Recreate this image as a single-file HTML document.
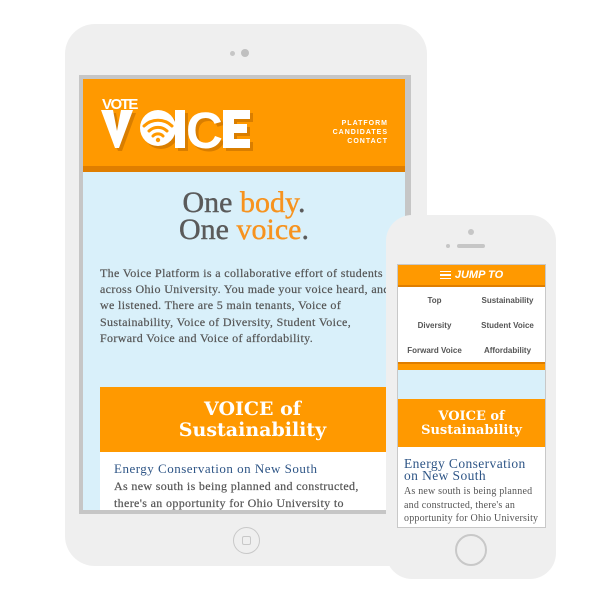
<!DOCTYPE html>
<html><head><meta charset="utf-8"><style>
*{margin:0;padding:0;box-sizing:border-box}
body{width:600px;height:600px;background:#fff;position:relative;overflow:hidden;font-family:"Liberation Serif",serif}
.abs{position:absolute}
.p{font-family:"Liberation Serif",serif;color:#555;white-space:nowrap}
.t{font-family:"DejaVu Serif","Liberation Serif",serif;font-weight:bold;color:#fff;text-align:center;white-space:nowrap}
</style></head><body>
<!-- tablet -->
<div class="abs" style="left:65px;top:24px;width:362px;height:542px;background:#efefef;border-radius:30px"></div>
<div class="abs" style="left:230px;top:51px;width:5px;height:5px;border-radius:50%;background:#c6c6c6"></div>
<div class="abs" style="left:241px;top:49px;width:8px;height:8px;border-radius:50%;background:#c0c0c0"></div>
<div class="abs" style="left:233px;top:527px;width:27px;height:27px;border-radius:50%;border:1.5px solid #c8c8c8"></div>
<div class="abs" style="left:242px;top:536px;width:9px;height:9px;border-radius:2px;border:1.5px solid #c8c8c8"></div>
<div class="abs" style="left:79px;top:75px;width:332px;height:439px;background:#c6c6c6"></div>
<div class="abs" style="left:83px;top:79px;width:322px;height:431px;background:#d9f0fa;overflow:hidden">
  <div class="abs" style="left:0;top:0;width:322px;height:93px;background:#ff9900;border-bottom:6px solid #df7e00"></div>
  <svg class="abs" style="left:14px;top:14px" width="160" height="62" viewBox="0 0 160 62">
    <g font-family="Liberation Sans,sans-serif" font-weight="bold">
      <text x="5" y="16" font-size="15" fill="#fff" letter-spacing="-1.5">VOTE</text>
      <g fill="#d97e00" transform="translate(3,3)">
        <polygon points="4,17 16,17 20,38 24,17 36,17 22,55 18,55"/>
        <circle cx="61" cy="35" r="18"/>
        <rect x="78" y="17" width="10" height="38"/>
        <text x="89" y="55" font-size="51">C</text>
        <polygon points="126,17 153,17 153,26 137,26 137,31 150,31 150,40 137,40 137,46 153,46 153,55 126,55"/>
      </g>
      <g fill="#fff">
        <polygon points="4,17 16,17 20,38 24,17 36,17 22,55 18,55"/>
        <circle cx="61" cy="35" r="18"/>
        <rect x="78" y="17" width="10" height="38"/>
        <text x="89" y="55" font-size="51">C</text>
        <polygon points="126,17 153,17 153,26 137,26 137,31 150,31 150,40 137,40 137,46 153,46 153,55 126,55"/>
      </g>
      <g fill="none" stroke="#ff9900" stroke-width="3" stroke-linecap="round">
        <path d="M47,33 A20,20 0 0 1 75,33"/>
        <path d="M52,38 A13,13 0 0 1 70,38"/>
        <path d="M56,43 A7,7 0 0 1 66,43"/>
      </g>
      <circle cx="61" cy="47" r="2.2" fill="#ff9900"/>
    </g>
  </svg>
  <div class="abs" style="right:17px;top:40px;text-align:right;font:bold 7px/9px 'Liberation Sans',sans-serif;color:#fff;letter-spacing:1px">PLATFORM<br>CANDIDATES<br>CONTACT</div>
  <div class="abs" style="left:0;width:322px;top:110px;text-align:center;font-size:30px;line-height:27px;color:#5a5a5a;-webkit-text-stroke:0.4px #5a5a5a">One <span style="color:#f7931e;-webkit-text-stroke:0.4px #f7931e">body</span>.<br>One <span style="color:#f7931e;-webkit-text-stroke:0.4px #f7931e">voice</span>.</div>
  <div class="abs p" style="left:17px;top:186px;font-size:12px;line-height:16.2px;letter-spacing:0.35px;-webkit-text-stroke:0.2px #555">The Voice Platform is a collaborative effort of students<br>across Ohio University. You made your voice heard, and<br>we listened. There are 5 main tenants, Voice of<br>Sustainability, Voice of Diversity, Student Voice,<br>Forward Voice and Voice of affordability.</div>
  <div class="abs t" style="left:17px;top:308px;width:305px;height:65px;background:#ff9900;font-size:19px;line-height:21px;padding-top:12px">VOICE of<br>Sustainability</div>
  <div class="abs" style="left:17px;top:373px;width:310px;height:70px;background:#fff"></div>
  <div class="abs p" style="left:31px;top:382px;font-size:13px;color:#2e5586;letter-spacing:0.5px">Energy Conservation on New South</div>
  <div class="abs p" style="left:31px;top:399px;font-size:12px;line-height:17px;letter-spacing:0.35px;-webkit-text-stroke:0.2px #555">As new south is being planned and constructed,<br>there's an opportunity for Ohio University to</div>
</div>
<!-- phone -->
<div class="abs" style="left:386px;top:215px;width:170px;height:364px;background:#efefef;border-radius:26px"></div>
<div class="abs" style="left:468px;top:229px;width:6px;height:6px;border-radius:50%;background:#c6c6c6"></div>
<div class="abs" style="left:446px;top:244px;width:4px;height:4px;border-radius:50%;background:#c6c6c6"></div>
<div class="abs" style="left:457px;top:244px;width:28px;height:4px;border-radius:2px;background:#c6c6c6"></div>
<div class="abs" style="left:455px;top:534px;width:32px;height:32px;border-radius:50%;border:2px solid #c8c8c8"></div>
<div class="abs" style="left:397px;top:264px;width:149px;height:264px;background:#c8c8c8"></div>
<div class="abs" style="left:398px;top:265px;width:147px;height:262px;background:#fff;overflow:hidden;font-family:'Liberation Sans',sans-serif">
  <div class="abs" style="left:0;top:0;width:147px;height:22px;background:#ff9900;border-bottom:2px solid #df7e00;color:#fff;font:italic bold 11px/20px 'Liberation Sans',sans-serif;text-align:center">
    <span style="display:inline-block;width:11px;height:8px;border-top:1.5px solid #fff;border-bottom:1.5px solid #fff;position:relative;vertical-align:-1px;margin-right:4px"><span style="position:absolute;left:0;top:2px;width:11px;height:1.5px;background:#fff"></span></span>JUMP TO</div>
  <div class="abs" style="top:23px;left:0;width:73px;text-align:center;font:bold 8px/25px 'Liberation Sans';color:#555">Top<br>Diversity<br>Forward Voice</div>
  <div class="abs" style="top:23px;left:73px;width:73px;text-align:center;font:bold 8px/25px 'Liberation Sans';color:#555">Sustainability<br>Student Voice<br>Affordability</div>
  <div class="abs" style="left:0;top:97px;width:147px;height:8px;background:#ff9900;border-top:2px solid #df7e00"></div>
  <div class="abs" style="left:0;top:105px;width:147px;height:29px;background:#d9f0fa"></div>
  <div class="abs t" style="left:0;top:134px;width:147px;height:48px;background:#ff9900;font-size:13px;line-height:14px;padding-top:11px">VOICE of<br>Sustainability</div>
  <div class="abs" style="left:6px;top:193px;font:13.5px/11.5px 'Liberation Serif',serif;color:#2e5586;letter-spacing:0.4px">Energy Conservation<br>on New South</div>
  <div class="abs p" style="left:6px;top:220px;font-size:10px;line-height:13.5px;letter-spacing:0.2px">As new south is being planned<br>and constructed, there's an<br>opportunity for Ohio University</div>
</div>
</body></html>
